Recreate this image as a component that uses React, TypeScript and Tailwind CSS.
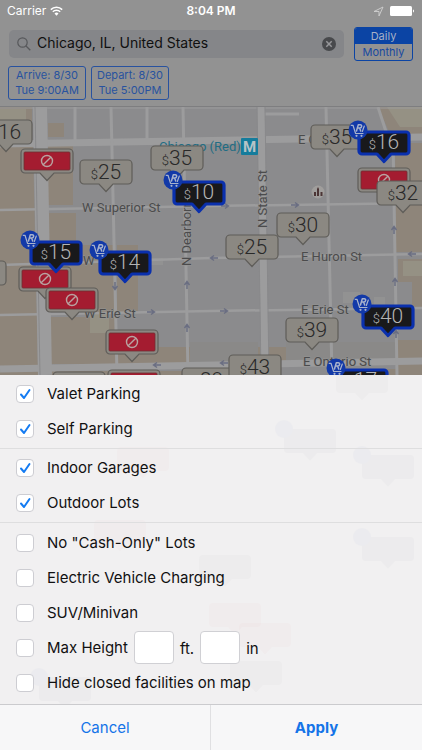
import React, { useState } from "react";

type PinKind = "plain" | "bookable" | "closed";

interface Pin {
  kind: PinKind;
  x: number;
  y: number;
  price?: string;
}

// x is the pin's centre, y its top edge, both measured from the map's top left corner.
const pins: Pin[] = [
  { kind: "plain", x: 6, y: 13, price: "16" },
  { kind: "closed", x: 47, y: 42 },
  { kind: "plain", x: 106, y: 53, price: "25" },
  { kind: "plain", x: 177, y: 39, price: "35" },
  { kind: "plain", x: 337, y: 18, price: "35" },
  { kind: "bookable", x: 384, y: 23, price: "16" },
  { kind: "closed", x: 384, y: 61 },
  { kind: "plain", x: 403, y: 74, price: "32" },
  { kind: "bookable", x: 199, y: 73, price: "10" },
  { kind: "plain", x: 303, y: 106, price: "30" },
  { kind: "plain", x: 252, y: 128, price: "25" },
  { kind: "plain", x: -20, y: 154 },
  { kind: "closed", x: 45, y: 160 },
  { kind: "bookable", x: 56, y: 133, price: "15" },
  { kind: "closed", x: 72, y: 181 },
  { kind: "bookable", x: 125, y: 143, price: "14" },
  { kind: "closed", x: 132, y: 223 },
  { kind: "bookable", x: 388, y: 197, price: "40" },
  { kind: "plain", x: 312, y: 211, price: "39" },
  { kind: "plain", x: 79, y: 265 },
  { kind: "closed", x: 134, y: 263 },
  { kind: "plain", x: 208, y: 261, price: "29" },
  { kind: "plain", x: 255, y: 248, price: "43" },
  { kind: "bookable", x: 362, y: 261, price: "17" },
];

const PIN_PATH =
  "M6 2H50a4 4 0 0 1 4 4V22a4 4 0 0 1-4 4H35L28 33.500L21 26H6a4 4 0 0 1-4-4V6a4 4 0 0 1 4-4Z";
const BOOKABLE_PATH =
  "M6 3H50a3 3 0 0 1 3 3V22a3 3 0 0 1-3 3H35L28 32.500L21 25H6a3 3 0 0 1-3-3V6a3 3 0 0 1 3-3Z";

function MapPin({ pin }: { pin: Pin }) {
  const bookable = pin.kind === "bookable";
  return (
    <button
      type="button"
      aria-label={pin.price ? `$${pin.price}` : "Parking facility"}
      className="absolute h-9 w-14 -translate-x-1/2"
      style={{ left: pin.x, top: pin.y - 2 }}
    >
      <svg viewBox="0 0 56 36" className="absolute inset-0 h-full w-full overflow-visible">
        {bookable ? (
          <path d={BOOKABLE_PATH} transform="translate(0 1)" fill="#19191b" stroke="#0a30ad" strokeWidth="3.200" strokeLinejoin="round" />
        ) : (
          <path d={PIN_PATH} fill="#8b8882" stroke="#5f5d59" strokeWidth="1.200" />
        )}
        {pin.kind === "closed" && (
          <g>
            <rect x="5" y="5" width="46" height="18" rx="1" fill="#a41c30" stroke="#6f3034" strokeWidth="0.800" />
            <g fill="none" stroke="#b9a3a1" strokeWidth="1.400">
              <circle cx="28" cy="14" r="5.500" />
              <path d="M24.200 17.800 31.800 10.200" />
            </g>
          </g>
        )}
      </svg>
      {pin.price && (
        <span
          className={`absolute inset-x-0 top-0 flex h-7 items-baseline justify-center font-['Roboto',sans-serif] font-light ${
            bookable ? "text-[#b4b4b4]" : "text-[#292929]"
          }`}
        >
          <span className="text-[13px] leading-7">$</span>
          <span className="text-[21px] leading-7">{pin.price}</span>
        </span>
      )}
      {bookable && (
        <svg viewBox="0 0 20 20" className="absolute -top-2 -left-2 h-5 w-5" aria-hidden="true">
          <circle cx="10" cy="10" r="9.500" fill="#1239a8" />
          <g fill="none" stroke="#a9b3cc" strokeWidth="1.200" strokeLinecap="round" strokeLinejoin="round">
            <path d="M3.200 5.300H5L7.600 13.500H15M14.300 11.500 16.300 6" />
            <path d="M8.500 11 10.300 4.800H12.300C14.300 4.800 14 8 11.800 8H9.600M11.600 8 12.700 11" strokeWidth="1.500" />
          </g>
          <circle cx="8.500" cy="15.800" r="1.100" fill="#a9b3cc" />
          <circle cx="13.500" cy="15.800" r="1.100" fill="#a9b3cc" />
        </svg>
      )}
    </button>
  );
}

function Arrow({ x, y, turn }: { x: number; y: number; turn: number }) {
  return (
    <path
      d="M-4 0H3M0-2.500 3.500 0 0 2.500"
      transform={`translate(${x} ${y}) rotate(${turn})`}
      fill="none"
      stroke="#6a6e82"
      strokeWidth="1.400"
    />
  );
}

function StreetMap() {
  return (
    <svg className="absolute top-0 left-0 h-[268px] w-[422px] overflow-visible" aria-hidden="true">
      <g fill="#8e857a">
        <path d="M0 37H33L38 268H0Z" />
        <path d="M0 0H32V32H0Z" />
        <path d="M48 16H64V30H48ZM48 39H73V98H48ZM49 106H76V140H49Z" />
        <path d="M50 138H115V205H50ZM117 138H138V205H117ZM50 210H116V257H50ZM118 240H420V257H118Z" />
        <path d="M395 36H900V145H396ZM398 152H430V200H412V175H398ZM398 233H460V262H398Z" />
        <path d="M50 264H256V300H50ZM335 262H900V300H335Z" />
        <path d="M378 0H900V27H390Z" />
      </g>
      <path d="M190 235H258V256H190ZM286 235H396V255H286Z" fill="#8a8988" />
      <path d="M0 2H26V16H14V26H0ZM387 0H422V20H400ZM403 154H422V169H403ZM90 207H109V226H90Z" fill="#959184" />
      <path d="M137 158H163V151H137ZM343 185H360V200H374V190H385V206H360V196H343Z" fill="#929292" />
      <g stroke="#9c9c9d" fill="none">
        <path d="M0 1H900" strokeWidth="1" />
        <path d="M0 37 422 30H900" strokeWidth="7" />
        <path d="M0 103 211 99 422 96H900M0 158 211 151 422 147H900M0 208 211 204 422 201H900" strokeWidth="2.500" />
        <path d="M0 262 422 254H900" strokeWidth="7" />
        <path d="M40 0 45 268" strokeWidth="14" />
        <path d="M261 0 265 268" strokeWidth="7.500" />
        <path d="M75 0V33M111 0 117 268M147 0V32M183 0 188 268M326 0 332 268M393 32 397 268M264 7H299M378 0 389 34" strokeWidth="3" />
      </g>
      <path d="M35 0 40 268M257 0 261 268M265 0 269 268" stroke="#89898b" strokeWidth="1" />
      <Arrow x={225} y={99} turn={0} />
      <Arrow x={295} y={98} turn={0} />
      <Arrow x={394} y={123} turn={-90} />
      <Arrow x={115} y={179} turn={90} />
      <Arrow x={187} y={178} turn={-90} />
      <Arrow x={187} y={221} turn={-90} />
      <Arrow x={151} y={205} turn={0} />
      <Arrow x={157} y={258} turn={180} />
      <Arrow x={214} y={151} turn={180} />
      <Arrow x={224} y={204} turn={0} />
      <Arrow x={412} y={147} turn={180} />
      <Arrow x={395} y={175} turn={-90} />
      <Arrow x={396} y={227} turn={-90} />
      <Arrow x={224} y={256} turn={180} />
      <circle cx="318" cy="85" r="6.500" fill="#a09e9c" />
      <path d="M314 89V85h2v4ZM317 89v-7l1-2 1 2v7ZM320.500 89v-4h2v4Z" fill="#4b3535" />
      <rect x="241" y="31" width="17" height="17" rx="1" fill="#157c9c" />
      <g className="font-['Roboto',sans-serif]" fontSize="13">
        <text x="249.500" y="45" fontSize="15" textAnchor="middle" fontWeight="700" fill="#b7c3c7">M</text>
        <text x="159" y="44" fill="#216d84">Chicago (Red)</text>
        <g fill="#4b4b4c" stroke="#949494" strokeWidth="1" paintOrder="stroke">
          <text x="82" y="105">W Superior St</text>
          <text x="83" y="158">W</text>
          <text x="84" y="211">W Erie St</text>
          <text x="298" y="37">E C</text>
          <text x="301" y="154">E Huron St</text>
          <text x="301" y="207">E Erie St</text>
          <text x="303" y="259">E Ontario St</text>
          <text transform="translate(191 159) rotate(-90)">N Dearborn</text>
          <text transform="translate(267 121) rotate(-90)">N State St</text>
        </g>
      </g>
    </svg>
  );
}

const ghosts = [
  { x: 362, y: -8, cart: false, color: "#1f2a4a" },
  { x: 310, y: 52, cart: true, color: "#1f2a4a" },
  { x: 388, y: 78, cart: true, color: "#1f2a4a" },
  { x: 388, y: 160, cart: true, color: "#1f2a4a" },
  { x: 225, y: 178, cart: false, color: "#1f2a4a" },
  { x: 256, y: 284, cart: false, color: "#1f2a4a" },
  { x: 65, y: 300, cart: true, color: "#1f2a4a" },
  { x: 143, y: 70, cart: false, color: "#d02040" },
  { x: 120, y: 143, cart: false, color: "#d02040" },
  { x: 235, y: 226, cart: false, color: "#d02040" },
  { x: 265, y: 246, cart: false, color: "#d02040" },
];

function SheetBackdrop() {
  return (
    <svg className="pointer-events-none absolute inset-0 h-full w-full" aria-hidden="true">
      {ghosts.map((g, i) => (
        <g key={i} opacity="0.018" transform={`translate(${g.x - 28} ${g.y})`}>
          <path d={PIN_PATH} fill={g.color} />
          {g.cart && <circle cx="2" cy="2" r="9" fill="#1239a3" />}
        </g>
      ))}
    </svg>
  );
}

function Option({ id, label, initial = false, children }: { id: string; label: string; initial?: boolean; children?: React.ReactNode }) {
  const [checked, setChecked] = useState(initial);
  return (
    <div className="flex h-[35px] items-center pl-4">
      <span className="relative mr-3 flex h-[18px] w-[18px] shrink-0">
        <input
          id={id}
          type="checkbox"
          checked={checked}
          onChange={(e) => setChecked(e.target.checked)}
          className="h-full w-full appearance-none rounded border border-[#cdcdd2] bg-white"
        />
        {checked && (
          <svg viewBox="0 0 18 18" className="pointer-events-none absolute inset-0" aria-hidden="true">
            <path d="M5 9.500 8 13 13.500 5" fill="none" stroke="#147bf2" strokeWidth="2" strokeLinecap="round" strokeLinejoin="round" />
          </svg>
        )}
      </span>
      <label htmlFor={id} className="pt-0.5 pl-px whitespace-nowrap">{label}</label>
      {children}
    </div>
  );
}

const sizeBox = "h-[33px] w-10 rounded border border-[#d0d0d4] bg-white px-1 text-center";
const dateBox = "h-[34px] w-[78px] rounded-[3px] border border-[#28529f] text-[11px] leading-[15px] text-[#28529f]";

export default function App() {
  return (
    <div className="flex min-h-screen flex-col bg-[#8b8b8d] font-['Inter','Liberation_Sans',sans-serif]">
      <header className="border-b border-[#7e7e80] bg-[#929292] pb-[6px]">
        <div className="grid h-[22px] grid-cols-3 items-center px-[7px] text-xs text-white">
          <span className="flex items-center gap-1">
            Carrier
            <svg width="13" height="10" viewBox="0 0 13 10" aria-label="Wi-Fi">
              <path d="M.8 3.600a8.200 8.200 0 0 1 11.400 0M2.800 5.800a5.300 5.300 0 0 1 7.400 0" fill="none" stroke="#fff" strokeWidth="1.500" />
              <path d="M4.500 7.500a3 3 0 0 1 4 0L6.500 9.700Z" fill="#fff" />
            </svg>
          </span>
          <span className="text-center font-semibold">8:04 PM</span>
          <span className="flex items-center justify-end gap-[6px]">
            <svg width="11" height="11" viewBox="0 0 11 11" aria-label="Location">
              <path d="M1 5.500 10 1 6 10V5.500Z" fill="none" stroke="#d0d0d0" strokeWidth="0.900" />
            </svg>
            <svg width="25" height="10" viewBox="0 0 25 10" aria-label="Battery">
              <rect width="22" height="10" rx="1.500" fill="#fff" />
              <path d="M23 3.500a1.600 1.600 0 0 1 0 3Z" fill="#fff" />
            </svg>
          </span>
        </div>
        <div className="flex items-center gap-[10px] px-[9px] pt-[5px]">
          <div className="flex h-7 min-w-0 flex-1 items-center rounded-[5px] bg-[#858689] px-2">
            <svg width="14" height="14" viewBox="0 0 14 14" className="shrink-0" aria-hidden="true">
              <circle cx="5.500" cy="5.500" r="4.700" fill="none" stroke="#57585b" strokeWidth="1.200" />
              <path d="M9 9 13.300 13.300" stroke="#57585b" strokeWidth="1.300" />
            </svg>
            <input
              aria-label="Location"
              defaultValue="Chicago, IL, United States"
              className="ml-[6px] min-w-0 flex-1 bg-transparent pb-0.5 text-sm text-[#101010] outline-none"
            />
            <button type="button" aria-label="Clear" className="shrink-0">
              <svg width="14" height="14" viewBox="0 0 14 14">
                <circle cx="7" cy="7" r="7" fill="#48494c" />
                <path d="m4.300 4.300 5.400 5.400m0-5.400L4.300 9.700" stroke="#97979a" strokeWidth="1.500" />
              </svg>
            </button>
          </div>
          <div className="flex h-[34px] w-[59px] flex-col overflow-hidden rounded-[3px] border border-[#0b44a4] text-[11px] leading-4">
            <button type="button" className="h-4 bg-[#0b44a4] text-[#a6b1c6]">Daily</button>
            <button type="button" className="h-4 text-[#1949a0]">Monthly</button>
          </div>
        </div>
        <div className="flex gap-[5px] px-2 pt-[5px]">
          <button type="button" className={dateBox}>Arrive: 8/30<br />Tue 9:00AM</button>
          <button type="button" className={dateBox}>Depart: 8/30<br />Tue 5:00PM</button>
        </div>
      </header>

      <section aria-label="Map" className="relative min-h-40 flex-1 overflow-hidden">
        <StreetMap />
        {pins.map((pin, i) => (
          <MapPin key={i} pin={pin} />
        ))}
      </section>

      <form className="relative bg-[#f1f0f1] text-[15px] text-[#111]">
        <SheetBackdrop />
        <div className="relative">
          <div className="border-b border-[#dededf] pt-px pb-0.5">
            <Option id="valet" label="Valet Parking" initial />
            <Option id="self" label="Self Parking" initial />
          </div>
          <div className="border-b border-[#dededf] pt-px pb-0.5">
            <Option id="indoor" label="Indoor Garages" initial />
            <Option id="outdoor" label="Outdoor Lots" initial />
          </div>
          <div className="pt-0.5 pb-1">
            <Option id="cash" label={'No "Cash-Only" Lots'} />
            <Option id="ev" label="Electric Vehicle Charging" />
            <Option id="suv" label="SUV/Minivan" />
            <Option id="height" label="Max Height">
              <input id="feet" aria-label="Maximum height, feet" className={`ml-[6px] ${sizeBox}`} />
              <label htmlFor="feet" className="ml-[6px] pt-1">ft.</label>
              <input id="inches" aria-label="Maximum height, inches" className={`ml-[6px] ${sizeBox}`} />
              <label htmlFor="inches" className="ml-[6px] pt-1">in</label>
            </Option>
            <Option id="closed" label="Hide closed facilities on map" />
          </div>
          <div className="grid h-[46px] grid-cols-2 border-t border-[#cbcbce] bg-[#f7f7f8] text-[#1474e8]">
            <button type="button" className="border-r border-[#e0e0e2] pt-0.5">Cancel</button>
            <button type="button" className="pt-0.5 font-bold">Apply</button>
          </div>
        </div>
      </form>
    </div>
  );
}
